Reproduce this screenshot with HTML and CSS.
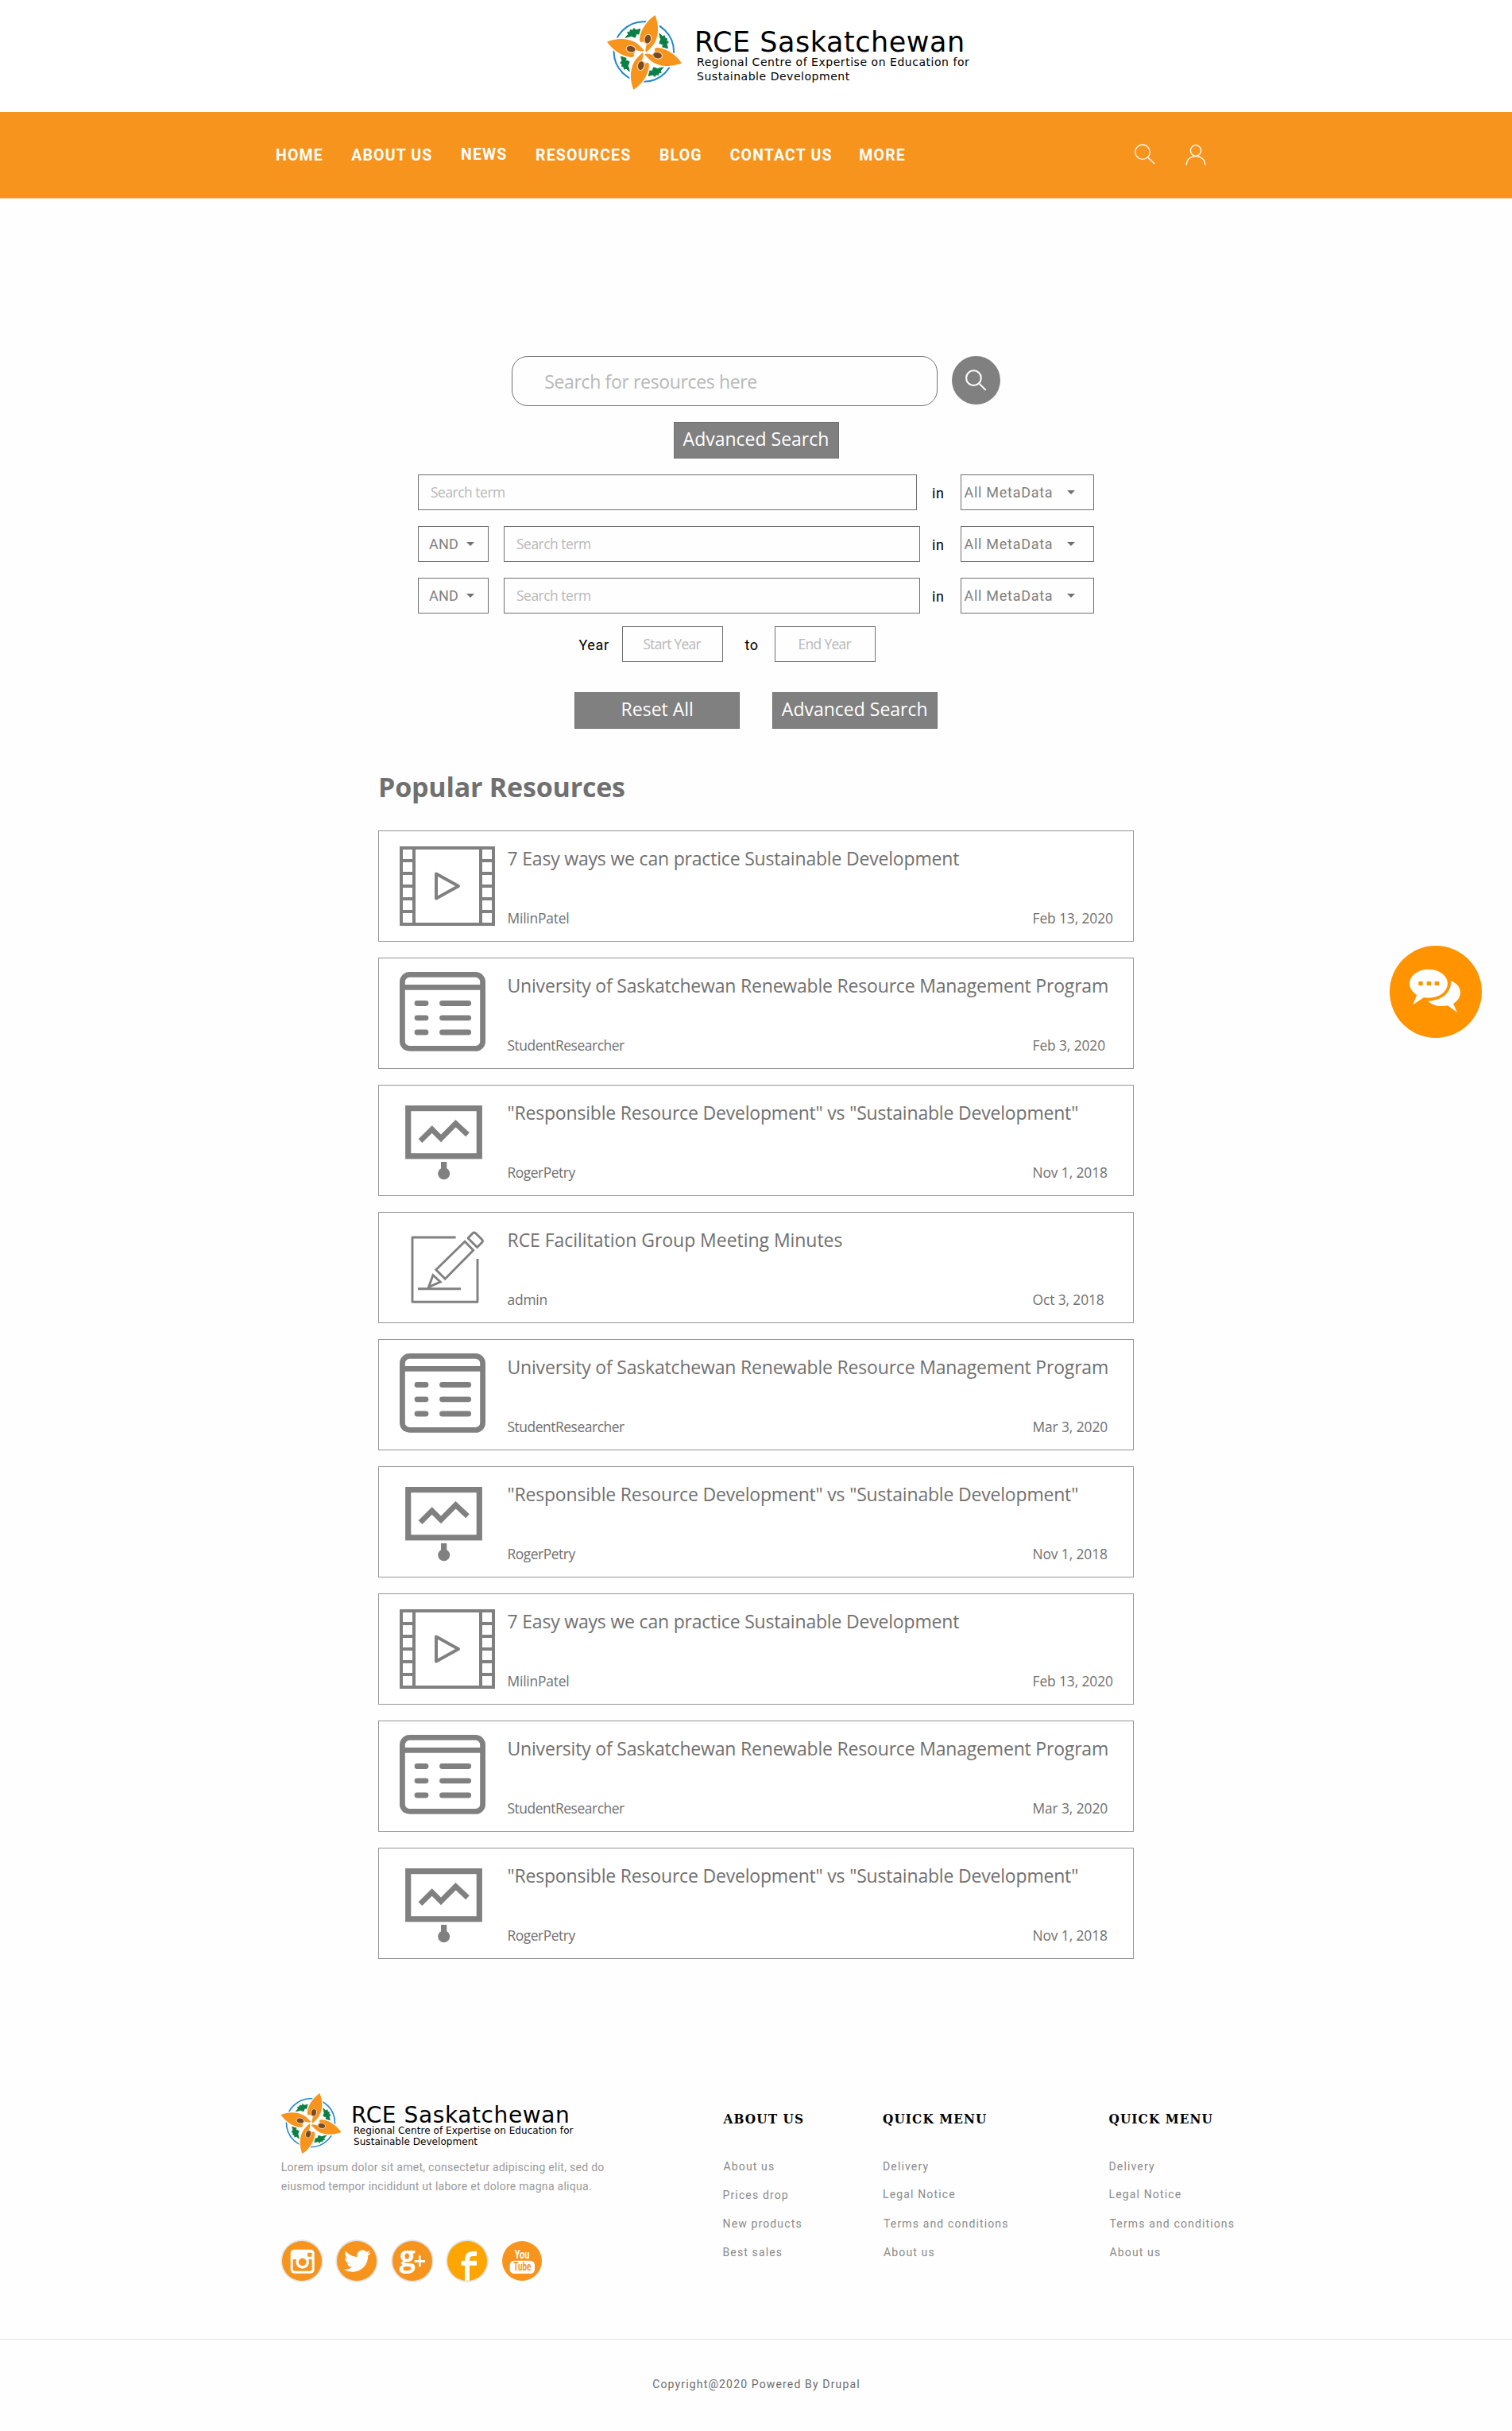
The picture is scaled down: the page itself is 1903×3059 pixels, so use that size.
FILE: index.html
```html
<!DOCTYPE html>
<html lang="en">
<head>
<meta charset="utf-8">
<title>RCE Saskatchewan - Resources</title>
<link rel="stylesheet" href="styles.css">
</head>
<body>
<svg class="sprite" aria-hidden="true">
  <defs>
    <path id="petal" d="M255 56C269 92 270 130 253 162C245 176 231 188 222 197C214 192 221 177 223 165C216 164 211 160 209 156C204 163 195 158 196 147C199 110 227 74 255 56Z"/>
    <path id="land" d="M270 125L283 137L291 134L292 143L300 145L298 154L306 158L299 166L303 182L283 178L285 168L271 163L276 148Z"/>
  </defs>
  <symbol id="star" viewBox="72 56 284 284">
    <circle cx="212" cy="195" r="114" fill="#fff" stroke="#1f87cf" stroke-width="6"/>
    <g fill="#0b7f45" stroke="#0b7f45" stroke-width="3">
      <use href="#land"/><use href="#land" transform="rotate(90 214 198)"/><use href="#land" transform="rotate(180 214 198)"/><use href="#land" transform="rotate(270 214 198)"/>
    </g>
    <g fill="none" stroke="#fff" stroke-width="10">
      <use href="#petal"/><use href="#petal" transform="rotate(90 214 198)"/><use href="#petal" transform="rotate(180 214 198)"/><use href="#petal" transform="rotate(270 214 198)"/>
    </g>
    <g fill="#f7941e">
      <use href="#petal"/><use href="#petal" transform="rotate(90 214 198)"/><use href="#petal" transform="rotate(180 214 198)"/><use href="#petal" transform="rotate(270 214 198)"/>
    </g>
    <g fill="#7a4a21" stroke="#fde3c4" stroke-width="3">
      <ellipse cx="227" cy="147" rx="13" ry="18" transform="rotate(12 227 147)"/>
      <ellipse cx="264" cy="209" rx="18" ry="13" transform="rotate(12 264 209)"/>
      <ellipse cx="201" cy="248" rx="13" ry="18" transform="rotate(12 201 248)"/>
      <ellipse cx="163" cy="185" rx="18" ry="13" transform="rotate(12 163 185)"/>
    </g>
  </symbol>
  <symbol id="video" viewBox="477 1046 161 138">
    <g fill="none" stroke="#808080" stroke-width="4">
      <rect x="505" y="1067" width="116" height="96"/>
      <path d="M521 1067V1163M605 1067V1163M505 1083H521M505 1099H521M505 1115H521M505 1131H521M505 1147H521M605 1083H621M605 1099H621M605 1115H621M605 1131H621M605 1147H621"/>
      <path d="M549 1099.5L577 1115L549 1130.5Z" stroke-linejoin="round"/>
    </g>
  </symbol>
  <symbol id="list" viewBox="477 1206 161 138">
    <g fill="none" stroke="#808080" stroke-width="6.8">
      <rect x="506.4" y="1226.4" width="101.2" height="93" rx="9"/>
      <path d="M506 1242.3H608"/>
      <path stroke-linecap="round" d="M525 1262.5H536M556.5 1262.5H589.7M525 1280.8H536M556.5 1280.8H589.7M525 1299H536M556.5 1299H589.7"/>
    </g>
  </symbol>
  <symbol id="chart" viewBox="477 1366 161 138">
    <rect x="513.7" y="1394.6" width="89.6" height="60.2" fill="none" stroke="#808080" stroke-width="7.2"/>
    <path d="M529 1435.6L543.7 1421L555 1432.5L573.5 1413.8L588.5 1427.8" fill="none" stroke="#808080" stroke-width="6.8"/>
    <path d="M555 1462H562.3V1471H555Z" fill="#808080"/><circle cx="558.7" cy="1476.8" r="7.5" fill="#808080"/>
  </symbol>
  <symbol id="edit" viewBox="477 1526 161 138">
    <g fill="none" stroke="#808080" stroke-width="2.9" stroke-linejoin="round">
      <path d="M573.6 1557H519V1638.3H601V1584M526 1621.8H580"/>
      <path stroke-linejoin="miter" d="M585 1562.3L595.7 1573.3L560.2 1609.3L548.8 1597.7Z"/>
      <path stroke-linejoin="miter" d="M545 1604.5L554.2 1613L539.5 1619.5Z"/>
      <path d="M589 1558L600.5 1569.6L606.6 1563.4Q608.2 1561.6 606.6 1559.8L598.6 1551.8Q596.6 1550.2 594.8 1552Z"/>
    </g>
  </symbol>
</svg>

<header class="top">
  <div class="brand">
    <svg class="brand-star"><use href="#star"/></svg>
    <div class="brand-text">
      <div class="brand-name">RCE Saskatchewan</div>
      <div class="brand-sub">Regional Centre of Expertise on Education for<br>Sustainable Development</div>
    </div>
  </div>
</header>

<nav class="nav">
  <a>HOME</a><a>ABOUT US</a><a class="raised">NEWS</a><a>RESOURCES</a><a>BLOG</a><a>CONTACT US</a><a>MORE</a>
  <svg class="nav-icon" viewBox="1422 141 40 108"><circle cx="1438" cy="191.2" r="9.2"/><path d="M1444.6 198L1453.3 206.3"/></svg>
  <svg class="nav-icon" viewBox="1485 141 40 108"><ellipse cx="1505" cy="189.5" rx="6.6" ry="6.8"/><path d="M1493.3 207.8C1493.3 192.8 1516.7 192.8 1516.7 207.8"/></svg>
</nav>

<main class="main">
  <section class="search">
    <div class="search-bar">
      <div class="search-box">Search for resources here</div>
      <svg class="search-go" viewBox="0 0 60 60"><circle cx="30" cy="30" r="30" fill="#808080" stroke="none"/><circle cx="27" cy="27.2" r="9.2"/><path d="M33.6 33.8L42 42.2"/></svg>
    </div>
    <div class="btn">Advanced Search</div>
    <div class="row">
      <div class="field wide">Search term</div><div class="in first">in</div>
      <div class="select">All MetaData<i class="caret"></i></div>
    </div>
    <div class="row">
      <div class="op">AND<i class="caret"></i></div><div class="field">Search term</div><div class="in">in</div>
      <div class="select">All MetaData<i class="caret"></i></div>
    </div>
    <div class="row">
      <div class="op">AND<i class="caret"></i></div><div class="field">Search term</div><div class="in">in</div>
      <div class="select">All MetaData<i class="caret"></i></div>
    </div>
    <div class="years">
      <div class="label">Year</div><div class="year">Start Year</div><div class="label to">to</div><div class="year end">End Year</div>
    </div>
    <div class="actions"><div class="btn">Reset All</div><div class="btn">Advanced Search</div></div>
  </section>

  <section class="popular">
    <h1>Popular Resources</h1>
    <div class="cards">
      <article class="card"><svg><use href="#video"/></svg><div class="info"><h2>7 Easy ways we can practice Sustainable Development</h2><p><span class="short">MilinPatel</span><time>Feb 13, 2020</time></p></div></article>
      <article class="card"><svg><use href="#list"/></svg><div class="info"><h2>University of Saskatchewan Renewable Resource Management Program</h2><p><span>StudentResearcher</span><time>Feb 3, 2020</time></p></div></article>
      <article class="card"><svg><use href="#chart"/></svg><div class="info"><h2>"Responsible Resource Development" vs "Sustainable Development"</h2><p><span>RogerPetry</span><time>Nov 1, 2018</time></p></div></article>
      <article class="card"><svg><use href="#edit"/></svg><div class="info"><h2 class="loose">RCE Facilitation Group Meeting Minutes</h2><p><span class="short">admin</span><time>Oct 3, 2018</time></p></div></article>
      <article class="card"><svg><use href="#list"/></svg><div class="info"><h2>University of Saskatchewan Renewable Resource Management Program</h2><p><span>StudentResearcher</span><time>Mar 3, 2020</time></p></div></article>
      <article class="card"><svg><use href="#chart"/></svg><div class="info"><h2>"Responsible Resource Development" vs "Sustainable Development"</h2><p><span>RogerPetry</span><time>Nov 1, 2018</time></p></div></article>
      <article class="card"><svg><use href="#video"/></svg><div class="info"><h2>7 Easy ways we can practice Sustainable Development</h2><p><span class="short">MilinPatel</span><time>Feb 13, 2020</time></p></div></article>
      <article class="card"><svg><use href="#list"/></svg><div class="info"><h2>University of Saskatchewan Renewable Resource Management Program</h2><p><span>StudentResearcher</span><time>Mar 3, 2020</time></p></div></article>
      <article class="card"><svg><use href="#chart"/></svg><div class="info"><h2>"Responsible Resource Development" vs "Sustainable Development"</h2><p><span>RogerPetry</span><time>Nov 1, 2018</time></p></div></article>
    </div>
  </section>
</main>

<footer>
  <div class="footer">
    <div class="about">
      <div class="brand small">
        <svg class="brand-star"><use href="#star"/></svg>
        <div class="brand-text">
          <div class="brand-name">RCE Saskatchewan</div>
          <div class="brand-sub">Regional Centre of Expertise on Education for<br>Sustainable Development</div>
        </div>
      </div>
      <p class="lorem">Lorem ipsum dolor sit amet, consectetur adipiscing elit, sed do<br>eiusmod tempor incididunt ut labore et dolore magna aliqua.</p>
      <div class="social">
        <svg viewBox="-81 -81 162 162"><circle r="80" fill="#e3e3e3"/><circle r="75" fill="#f7941e"/><rect x="-43" y="-43" width="90" height="90" rx="14" fill="#fff"/><path d="M-34 -6H38V30Q38 38 30 38H-26Q-34 38 -34 30Z" fill="#f7941e"/><circle cx="2" cy="4" r="25" fill="#fff"/><circle cx="2" cy="4" r="14.5" fill="#f7941e"/><rect x="21" y="-31" width="16" height="15" rx="2" fill="#f7941e"/></svg>
        <svg viewBox="-81 -81 162 162"><circle r="80" fill="#e3e3e3"/><circle r="75" fill="#f7941e"/><path transform="translate(-48 -50) scale(4.2)" fill="#fff" d="M23.95 4.57a10 10 0 0 1-2.82.77 4.96 4.96 0 0 0 2.16-2.72c-.95.55-2 .96-3.13 1.18a4.92 4.92 0 0 0-8.38 4.48C7.69 8.1 4.07 6.13 1.64 3.16a4.82 4.82 0 0 0-.67 2.48c0 1.71.87 3.21 2.19 4.1a4.9 4.9 0 0 1-2.23-.62v.06a4.92 4.92 0 0 0 3.95 4.83 5 5 0 0 1-2.21.08 4.94 4.94 0 0 0 4.6 3.42A9.87 9.87 0 0 1 0 19.54a14 14 0 0 0 7.55 2.21c9.05 0 14-7.5 14-13.98 0-.21 0-.42-.02-.63a9.94 9.94 0 0 0 2.46-2.55z"/></svg>
        <svg viewBox="-81 -81 162 162"><circle r="80" fill="#e3e3e3"/><circle r="75" fill="#f7941e"/><text class="gplus" x="-49" y="22">g</text><path d="M8 1H48M28 -20V22" stroke="#fff" stroke-width="8"/></svg>
        <svg viewBox="-81 -81 162 162"><circle r="80" fill="#e3e3e3"/><circle r="75" fill="#ffa500"/><path d="M0 74V-4Q0 -27 20 -27H36M-23 8H36" fill="none" stroke="#fff" stroke-width="18"/></svg>
        <svg viewBox="-81 -81 162 162"><circle r="75" fill="#f7941e"/><text class="tube white" x="-28" y="-9" textLength="56" lengthAdjust="spacingAndGlyphs">You</text><rect x="-46" y="-1" width="94" height="49" rx="16" fill="#fff"/><text class="tube" x="-32" y="37" textLength="66" lengthAdjust="spacingAndGlyphs">Tube</text></svg>
      </div>
    </div>
    <div class="col first"><h3>ABOUT US</h3><a>About us</a><a class="out">Prices drop</a><a class="out">New products</a><a class="out">Best sales</a></div>
    <div class="col"><h3>QUICK MENU</h3><a class="out">Delivery</a><a class="out raised">Legal Notice</a><a>Terms and conditions</a><a>About us</a></div>
    <div class="col"><h3>QUICK MENU</h3><a class="out">Delivery</a><a class="out raised">Legal Notice</a><a>Terms and conditions</a><a>About us</a></div>
  </div>
  <div class="copyright">Copyright@2020 Powered By Drupal</div>
</footer>

<svg class="chat" viewBox="147 120 348 348">
  <circle cx="321" cy="294" r="174" fill="#ff9300"/>
  <g fill="#fff">
    <ellipse cx="294" cy="263" rx="72" ry="54"/>
    <path d="M251 302L235 343L278 314Z"/>
    <path d="M378 252C400 261 414 277 414 297C414 315 402 330 387 339L402 372L366 346C335 352 308 345 292 329C340 328 382 300 378 252Z"/>
  </g>
  <path d="M256 255H272V270H256ZM287 255H303V270H287ZM317 255H333V270H317Z" fill="#ff9300"/>
</svg>
</body>
</html>
```
FILE: styles.css
```css
* { box-sizing: border-box; margin: 0; padding: 0; }
body {
  position: relative;
  width: 1903px;
  height: 3059px;
  background: #fefefe;
  font-family: "Open Sans", "Noto Sans", sans-serif;
  overflow: hidden;
}
svg { display: block; flex: none; }
.sprite { position: absolute; width: 0; height: 0; }

/* brand */
.top { height: 141px; padding: 19px 0 0 764px; background: #fff; }
.brand { display: flex; font-family: "DejaVu Sans", sans-serif; color: #000; white-space: nowrap; }
.brand-star { width: 94px; height: 94px; }
.brand-text { padding: 17px 0 0 16px; }
.brand-name { font-size: 35px; line-height: 35px; letter-spacing: .53px; }
.brand-sub { margin: -2px 0 0 3px; font-size: 14px; line-height: 18px; letter-spacing: .53px; }
.brand.small .brand-star { width: 77px; height: 76px; }
.brand.small .brand-text { padding: 14px 0 0 12px; }
.brand.small .brand-name { font-size: 28px; line-height: 28px; letter-spacing: .6px; }
.brand.small .brand-sub { margin: -2px 0 0 3px; font-size: 12px; line-height: 14.4px; letter-spacing: .06px; }

/* navigation */
.nav {
  display: grid;
  grid-template-columns: 95.2px 137.8px 94px 156px 88.7px 162.7px 340.6px 63px 40px;
  height: 109px;
  padding-left: 347px;
  background: #f7941e;
  border-bottom: 1px solid #fbc98d;
  font: bold 19.5px/109px Roboto, sans-serif;
  letter-spacing: 1.15px;
  color: #fff;
}
.nav a { white-space: nowrap; height: 108px; }
.nav .raised { margin-top: -1px; }
.nav-icon { width: 40px; height: 108px; fill: none; stroke: #fff; stroke-width: 1.3; }

/* search form */
.search { width: 851px; margin: 198px auto 0; display: flex; flex-direction: column; }
.search-bar { display: flex; justify-content: center; gap: 17.5px; height: 63px; }
.search-box {
  width: 536px;
  height: 63px;
  border: 1px solid #707070;
  border-radius: 20px;
  padding: 1px 0 0 40px;
  font-size: 23px;
  line-height: 61px;
  letter-spacing: -.36px;
  color: #b8b8b8;
}
.search-go { width: 61px; height: 61px; fill: none; stroke: #fff; stroke-width: 2; }
.btn {
  width: 208px;
  height: 46px;
  background: #808080;
  border: 1px solid #707070;
  color: #fff;
  font-size: 23px;
  line-height: 41px;
  text-align: center;
}
.search > .btn { align-self: center; margin: 20px 0; }
.row { display: flex; height: 45px; margin-bottom: 20px; }
.row:nth-of-type(5) { margin-bottom: 16px; }
.field, .op, .select, .year {
  border: 1px solid #707070;
  height: 45px;
  line-height: 43px;
  font-size: 17.4px;
  color: #b8b8b8;
  letter-spacing: -.46px;
  white-space: nowrap;
}
.field { width: 524px; margin-left: 19px; padding-left: 15px; }
.field.wide { width: 628px; margin-left: 0; }
.in, .label { font: 18px/47px Roboto, sans-serif; color: #000; letter-spacing: .6px; }
.in { width: 50px; padding-left: 15px; }
.in.first { width: 54px; padding-left: 19px; }
.select, .op { font-family: Roboto, sans-serif; font-size: 18px; color: #808080; letter-spacing: .72px; display: flex; align-items: center; }
.select { width: 168.5px; padding-left: 4px; margin-left: auto; }
.op { width: 89px; padding-left: 13px; letter-spacing: .2px; }
.caret { border: 5px solid transparent; border-top: 5.5px solid #707070; border-bottom: 0; margin-left: 18px; }
.op .caret { margin-left: 10px; }
.years { display: flex; padding-left: 202.5px; height: 45px; }
.years .label { width: 54px; }
.years .label.to { width: 37px; margin-left: 28px; }
.year { width: 127px; padding-left: 26px; letter-spacing: -.7px; }
.year.end { padding-left: 29px; letter-spacing: -.65px; }
.actions { display: flex; gap: 40.5px; justify-content: center; margin-top: 38px; }

/* resources */
.popular { width: 951px; margin: 50px auto 0; }
h1 { font-size: 34px; line-height: 47px; letter-spacing: -.2px; color: #707070; margin-bottom: 31px; }
.cards { display: flex; flex-direction: column; gap: 20px; }
.card { display: flex; height: 140px; border: 1px solid #959595; background: #fff; color: #707070; }
.card svg { width: 161px; height: 138px; }
.info { flex: 1; display: flex; flex-direction: column; justify-content: space-between; padding: 18px 0 17px .5px; }
h2 { font-size: 23px; line-height: 33px; font-weight: 400; letter-spacing: -.19px; white-space: nowrap; }
h2.loose { letter-spacing: -.04px; }
.info p { display: flex; justify-content: space-between; font-size: 17.4px; line-height: 24px; }
.info span { letter-spacing: -.45px; }
.info span.short { letter-spacing: -.2px; }
.info time { width: 126.5px; letter-spacing: -.1px; }

/* footer */
.footer { display: grid; grid-template-columns: 556.5px 201.5px 284.5px 1fr; padding: 169px 0 71px 353px; height: 478px; }
.lorem { margin: 4.5px 0 0 .7px; font: 14px/24px Roboto, sans-serif; letter-spacing: .28px; color: #999; white-space: nowrap; }
.social { display: flex; gap: 15.3px; margin-top: 55px; }
.social svg { width: 54px; height: 54px; overflow: visible; }
.gplus { font: bold 107px "Open Sans", sans-serif; fill: #fff; }
.tube { font: bold 43px Roboto, sans-serif; fill: #f7941e; }
.tube.white { fill: #fff; }
.col { display: flex; flex-direction: column; padding-top: 20px; }
.col.first h3 { padding-left: 1px; }
h3 { font: bold 17px/24px "DejaVu Serif Condensed", "DejaVu Serif", serif; letter-spacing: 1.1px; margin-bottom: 30px; color: #000; white-space: nowrap; }
.col a { font: 14px/36px Roboto, sans-serif; letter-spacing: 1.14px; color: #8a8a8a; padding-left: 1px; }
.col a.out { padding-left: 0; margin-left: 0; }
.col a.raised { margin-top: -1px; margin-bottom: 1px; }
.copyright { border-top: 1px solid #e3e3e3; padding: 44px 0 0 1px; font: 14px/24px Roboto, sans-serif; letter-spacing: 1.15px; text-align: center; color: #6c6c6c; }

/* floating chat button */
.chat { position: absolute; left: 1749px; top: 1190px; width: 116px; height: 116px; }
```
